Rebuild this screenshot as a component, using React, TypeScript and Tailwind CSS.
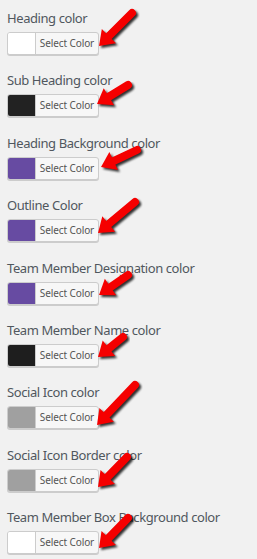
import React from "react";

const rows: { label: string; color: string }[] = [
  { label: "Heading color", color: "#ffffff" },
  { label: "Sub Heading color", color: "#222222" },
  { label: "Heading Background color", color: "#674ba2" },
  { label: "Outline Color", color: "#674ba2" },
  { label: "Team Member Designation color", color: "#674ba2" },
  { label: "Team Member Name color", color: "#1e1e1e" },
  { label: "Social Icon color", color: "#a0a0a0" },
  { label: "Social Icon Border color", color: "#a0a0a0" },
  { label: "Team Member Box Background color", color: "#ffffff" },
];

const arrows: [number, number, number, number][] = [
  [132, 13, 99, 46],
  [128, 85, 97, 104],
  [137, 150, 101, 167],
  [135, 202, 98, 233],
  [128, 275, 99, 295],
  [123, 337, 98, 357],
  [135, 385, 97, 425],
  [127, 457, 98, 487],
  [128, 518, 99, 548],
];

function Arrow({ t }: { t: [number, number, number, number] }) {
  const [x1, y1, x2, y2] = t;
  const dx = x2 - x1;
  const dy = y2 - y1;
  const len = Math.hypot(dx, dy);
  const ux = dx / len;
  const uy = dy / len;
  const px = -uy;
  const py = ux;
  const hl = 14;
  const hw = 10;
  const bx = x2 - ux * hl;
  const by = y2 - uy * hl;
  const head = `${x2},${y2} ${bx + px * hw},${by + py * hw} ${bx - px * hw},${by - py * hw}`;
  return (
    <g>
      <g transform="translate(2,2)" filter="url(#blur)" opacity="0.8">
        <line x1={x1} y1={y1} x2={bx + ux * 2} y2={by + uy * 2} stroke="#000" strokeWidth={8} strokeLinecap="round" />
        <polygon points={head} fill="#000" />
      </g>
      <line x1={x1} y1={y1} x2={bx + ux * 2} y2={by + uy * 2} stroke="#f50000" strokeWidth={8} strokeLinecap="round" />
      <polygon points={head} fill="#f50000" />
    </g>
  );
}

export default function App() {
  return (
    <div
      className="relative w-[257px] h-[559px] overflow-hidden bg-[#f1f1f1] pl-[7px] pt-[8px]"
      style={{ fontFamily: '"Noto Sans", "Open Sans", sans-serif' }}
    >
      {rows.map((r) => (
        <div key={r.label} className="mb-[15.4px]">
          <div className="h-[20px] leading-[20px] text-[13px] text-[#50575e] whitespace-nowrap tracking-[-0.42px]">
            {r.label}
          </div>
          <div className="mt-[4px] flex h-[23px] w-[92px] overflow-hidden rounded-[3px] border border-[#cccccc] bg-[#f7f7f7] shadow-[0_1px_0_#cccccc]">
            <div className="w-[28px] h-full border-r border-[#cccccc]" style={{ backgroundColor: r.color }} />
            <div className="flex-1 flex items-center justify-center text-[10px] tracking-[-0.1px] text-[#555555]">
              Select Color
            </div>
          </div>
        </div>
      ))}
      <svg className="absolute left-0 top-0 pointer-events-none" width={257} height={559}>
        <defs>
          <filter id="blur" x="-20%" y="-20%" width="140%" height="140%">
            <feGaussianBlur stdDeviation="1.2" />
          </filter>
        </defs>
        {arrows.map((a, i) => (
          <Arrow key={i} t={a} />
        ))}
      </svg>
    </div>
  );
}
